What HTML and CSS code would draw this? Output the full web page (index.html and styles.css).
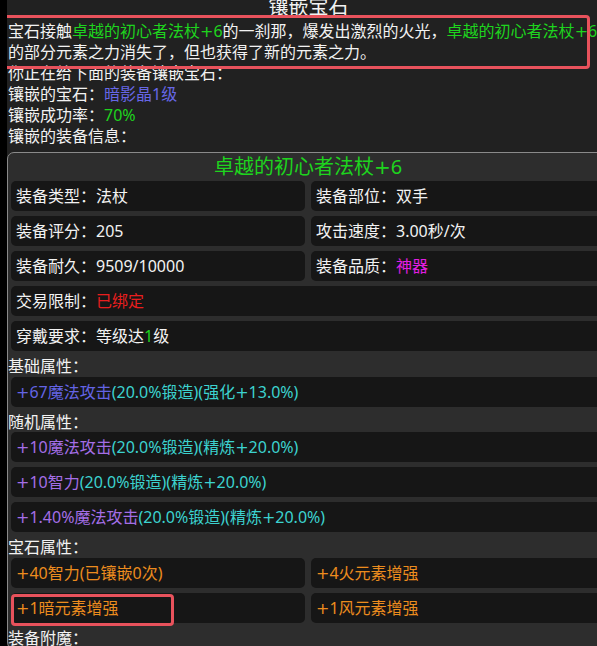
FILE: index.html
```html
<!DOCTYPE html>
<html lang="zh-CN">
<head>
<meta charset="utf-8">
<title>镶嵌宝石</title>
<link rel="stylesheet" href="styles.css">
</head>
<body>
<div class="page">
  <h1 class="title">镶嵌宝石</h1>
  <p class="line msg">宝石接触<span class="c-green">卓越的初心者法杖<span class="pl">+</span>6</span>的一刹那，爆发出激烈的火光，<span class="c-green">卓越的初心者法杖<span class="pl">+</span>6</span>的部分元素之力消失了，但也获得了新的元素之力。</p>
  <p class="line">你正在给下面的装备镶嵌宝石：</p>
  <p class="line">镶嵌的宝石：<span class="c-blue">暗影晶1级</span></p>
  <p class="line">镶嵌成功率：<span class="c-green">70%</span></p>
  <p class="line">镶嵌的装备信息：</p>

  <div class="card">
    <div class="card-title">卓越的初心者法杖<span class="pl">+</span>6</div>
    <div class="card-body">
      <div class="grid2">
        <div class="cell">装备类型：法杖</div>
        <div class="cell">装备部位：双手</div>
        <div class="cell">装备评分：205</div>
        <div class="cell">攻击速度：3.00秒/次</div>
        <div class="cell">装备耐久：9509/10000</div>
        <div class="cell">装备品质：<span class="c-magenta">神器</span></div>
      </div>
      <div class="cell">交易限制：<span class="c-red">已绑定</span></div>
      <div class="cell">穿戴要求：等级达<span class="c-green">1</span>级</div>

      <div class="label">基础属性：</div>
      <div class="cell"><span class="c-slate"><span class="pl">+</span>67魔法攻击</span><span class="c-cyan">(20.0%锻造)(强化<span class="pl">+</span>13.0%)</span></div>

      <div class="label">随机属性：</div>
      <div class="cell"><span class="c-violet"><span class="pl">+</span>10魔法攻击</span><span class="c-cyan">(20.0%锻造)(精炼<span class="pl">+</span>20.0%)</span></div>
      <div class="cell"><span class="c-violet"><span class="pl">+</span>10智力</span><span class="c-cyan">(20.0%锻造)(精炼<span class="pl">+</span>20.0%)</span></div>
      <div class="cell"><span class="c-violet"><span class="pl">+</span>1.40%魔法攻击</span><span class="c-cyan">(20.0%锻造)(精炼<span class="pl">+</span>20.0%)</span></div>

      <div class="label">宝石属性：</div>
      <div class="grid2">
        <div class="cell c-orange"><span class="pl">+</span>40智力(已镶嵌0次)</div>
        <div class="cell c-orange"><span class="pl">+</span>4火元素增强</div>
        <div class="cell c-orange"><span class="pl">+</span>1暗元素增强</div>
        <div class="cell c-orange"><span class="pl">+</span>1风元素增强</div>
      </div>

      <div class="label">装备附魔：</div>
    </div>
  </div>

  <div class="mark mark-msg"></div>
  <div class="mark mark-gem"></div>
</div>
</body>
</html>
```

FILE: styles.css
```css
html {
  background: #000;
  overflow: hidden;
}
body {
  margin: 0 0 0 7px;
  background: #212121;
  min-height: 700px;
  font-family: "Noto Sans", "Noto Sans CJK SC", sans-serif;
  color: #f2f2f2;
  font-size: 16px;
}
.page {
  position: relative;
  width: 601px;
  padding-left: 1px;
  margin-top: -7px;
}
.title {
  margin: 0;
  font-size: 20px;
  font-weight: normal;
  line-height: 28px;
  text-align: center;
}
.line {
  margin: 0;
  line-height: 21px;
}
.msg {
  max-width: 596px;
}
.pl {
  font-family: "DejaVu Sans", sans-serif;
  font-weight: normal;
}
.c-green { color: #1ed41e; }
.c-blue { color: #6767e6; }
.c-slate { color: #6464e4; }
.c-cyan { color: #3cd2cf; }
.c-violet { color: #a46ee6; }
.c-red { color: #e81e1e; }
.c-magenta { color: #e21ee2; }
.c-orange { color: #ec8c1e; }

.card {
  margin: 5px 0 0 -1px;
  border: 1px solid #8a8a8a;
  border-radius: 7px;
  background: #2d2d2d;
}
.card-title {
  text-align: center;
  font-size: 20px;
  line-height: 28px;
  color: #1ed41e;
}
.card-body {
  display: flex;
  flex-direction: column;
}
.grid2 {
  display: grid;
  grid-template-columns: 1fr 1fr;
  gap: 5px 6px;
  margin: 0 3px 5px;
}
.grid2 .cell { margin: 0; }
.cell {
  margin: 0 3px 5px;
  height: 30px;
  line-height: 30px;
  padding-left: 5px;
  border-radius: 5px;
  background: #161616;
  white-space: nowrap;
}
.label {
  line-height: 20.5px;
}
.mark {
  position: absolute;
  border: 3px solid #e8525c;
  border-radius: 4px;
  box-sizing: border-box;
}
.mark-msg {
  left: -4px;
  top: 22px;
  width: 587px;
  height: 54px;
}
.mark-gem {
  left: 4px;
  top: 601px;
  width: 163px;
  height: 32px;
}
```
